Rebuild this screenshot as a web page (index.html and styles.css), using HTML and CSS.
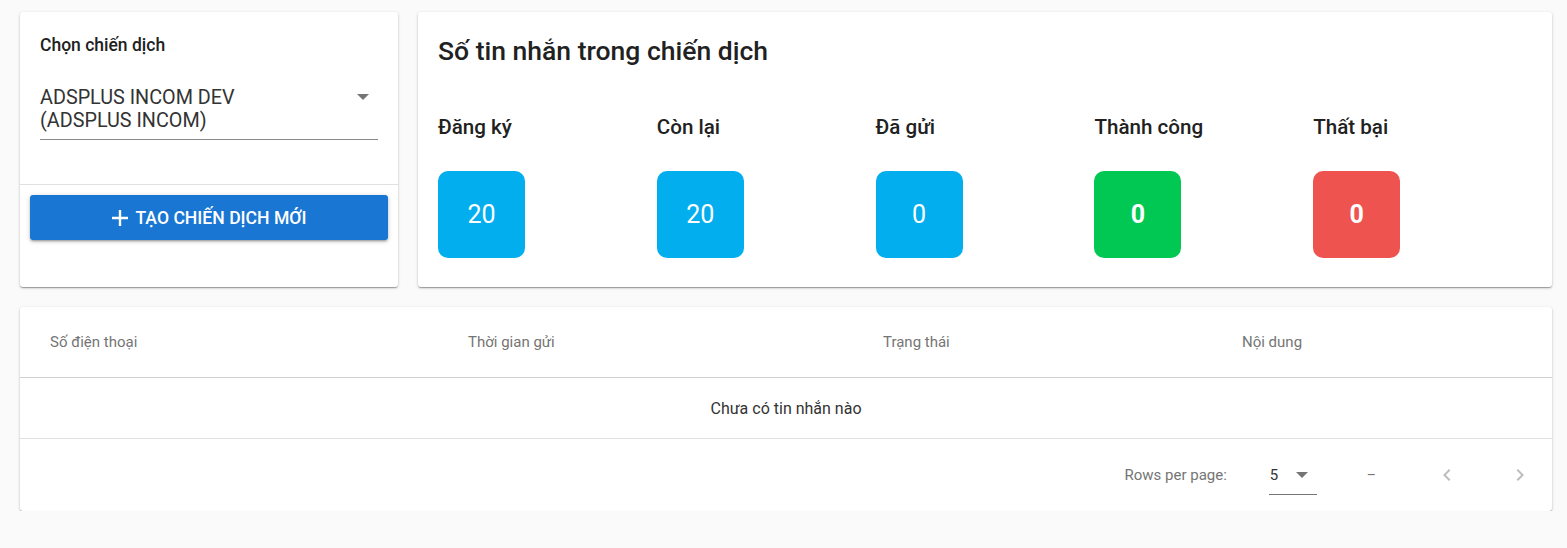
FILE: index.html
```html
<!DOCTYPE html>
<html lang="vi">
<head>
<meta charset="utf-8">
<link rel="stylesheet" href="styles.css">
</head>
<body>
<div class="page">
  <div class="top">
    <div class="card campaign">
      <div class="campaign-head">
        <div class="field-label">Chọn chiến dịch</div>
        <div class="select">
          <div class="select-text">ADSPLUS INCOM DEV<br>(ADSPLUS INCOM)</div>
          <svg class="select-arrow" width="12" height="6" viewBox="0 0 12 6"><path d="M0 0 L12 0 L6 6 Z" fill="#757575"/></svg>
        </div>
      </div>
      <div class="campaign-actions">
        <button class="btn-create">
          <svg class="plus" width="18" height="18" viewBox="0 0 18 18"><path d="M9 1 V17 M1 9 H17" stroke="#fff" stroke-width="2.4" fill="none"/></svg>
          <span>TẠO CHIẾN DỊCH MỚI</span>
        </button>
      </div>
    </div>
    <div class="card stats">
      <h2 class="stats-title">Số tin nhắn trong chiến dịch</h2>
      <div class="stats-grid">
        <div class="stat">
          <div class="stat-label">Đăng ký</div>
          <div class="stat-box blue">20</div>
        </div>
        <div class="stat">
          <div class="stat-label">Còn lại</div>
          <div class="stat-box blue">20</div>
        </div>
        <div class="stat">
          <div class="stat-label">Đã gửi</div>
          <div class="stat-box blue">0</div>
        </div>
        <div class="stat">
          <div class="stat-label">Thành công</div>
          <div class="stat-box green">0</div>
        </div>
        <div class="stat">
          <div class="stat-label">Thất bại</div>
          <div class="stat-box red">0</div>
        </div>
      </div>
    </div>
  </div>
  <div class="card table-card">
    <div class="thead">
      <div class="th">Số điện thoại</div>
      <div class="th">Thời gian gửi</div>
      <div class="th">Trạng thái</div>
      <div class="th">Nội dung</div>
    </div>
    <div class="empty-row">Chưa có tin nhắn nào</div>
    <div class="pager">
      <span class="rows-label">Rows per page:</span>
      <div class="rows-select">
        <span>5</span>
        <svg width="12" height="6" viewBox="0 0 12 6"><path d="M0 0 L12 0 L6 6 Z" fill="#757575"/></svg>
      </div>
      <span class="range">–</span>
      <button class="page-btn prev" aria-label="Previous page">
        <svg width="24" height="24" viewBox="0 0 24 24"><path d="M15.41 7.41 14 6l-6 6 6 6 1.41-1.41L10.83 12z" fill="#bdbdbd"/></svg>
      </button>
      <button class="page-btn next" aria-label="Next page">
        <svg width="24" height="24" viewBox="0 0 24 24"><path d="M10 6 8.59 7.41 13.17 12l-4.58 4.59L10 18l6-6z" fill="#bdbdbd"/></svg>
      </button>
    </div>
  </div>
</div>
</body>
</html>
```

FILE: styles.css
```css
* { box-sizing: border-box; }

html, body {
  margin: 0;
  padding: 0;
  background: #fafafa;
  font-family: Roboto, "Noto Sans", "Liberation Sans", sans-serif;
  color: #212121;
}

.page {
  padding: 12px 15px 0 20px;
  display: flex;
  flex-direction: column;
  gap: 20px;
}

.card {
  background: #fff;
  border-radius: 3px;
  box-shadow: 0 1px 3px rgba(0,0,0,.22), 0 1px 1px rgba(0,0,0,.16), 0 2px 1px -1px rgba(0,0,0,.14);
}

.top {
  display: flex;
  gap: 20px;
  height: 275px;
}

/* Campaign card */
.campaign {
  width: 378px;
  flex: none;
  display: flex;
  flex-direction: column;
}

.campaign-head {
  padding: 23px 20px 44px;
  border-bottom: 1px solid #e0e0e0;
}

.field-label {
  font-size: 17.5px;
  font-weight: 500;
  line-height: 20px;
  color: #212121;
}

.select {
  margin-top: 31px;
  display: flex;
  justify-content: space-between;
  align-items: flex-start;
  border-bottom: 1px solid #8a8a8a;
  padding-bottom: 7px;
}

.select-text {
  font-size: 19.8px;
  line-height: 23px;
  color: #333;
}

.select-arrow {
  margin: 8px 9px 0 0;
}

.campaign-actions {
  padding: 10px 10px;
}

.btn-create {
  width: 100%;
  height: 45px;
  border: none;
  border-radius: 3px;
  background: #1976d2;
  color: #fff;
  font-family: inherit;
  font-size: 17.6px;
  font-weight: 500;
  display: flex;
  align-items: center;
  justify-content: center;
  gap: 6px;
  box-shadow: 0 1px 5px rgba(0,0,0,.2), 0 2px 2px rgba(0,0,0,.14), 0 3px 1px -2px rgba(0,0,0,.12);
}

.plus { margin-top: 1px; }

/* Stats card */
.stats {
  flex: 1;
  padding: 23px 20px 29px;
}

.stats-title {
  margin: 0;
  font-size: 26.5px;
  line-height: 32px;
  font-weight: 500;
  color: #212121;
}

.stats-grid {
  margin-top: 48px;
  display: grid;
  grid-template-columns: repeat(5, 1fr);
}

.stat-label {
  font-size: 20.6px;
  line-height: 24px;
  font-weight: 500;
  color: #212121;
}

.stat-box {
  margin-top: 32px;
  width: 87px;
  height: 87px;
  border-radius: 10px;
  display: flex;
  align-items: center;
  justify-content: center;
  color: #fff;
  font-size: 25px;
}

.stat-box.blue { background: #03aeef; }
.stat-box.green { background: #00c853; font-weight: 700; }
.stat-box.red { background: #ef5350; font-weight: 700; }

/* Table */
.table-card {
  height: 204px;
  display: flex;
  flex-direction: column;
}

.thead {
  height: 71px;
  display: grid;
  grid-template-columns: 418px 415px 359px 1fr;
  align-items: center;
  padding-left: 30px;
  border-bottom: 1px solid #d0d0d0;
}

.th {
  font-size: 15px;
  color: #757575;
}

.empty-row {
  height: 61px;
  display: flex;
  align-items: center;
  justify-content: center;
  font-size: 16px;
  color: #333;
  border-bottom: 1px solid #e0e0e0;
}

.pager {
  flex: 1;
  display: flex;
  align-items: center;
  justify-content: flex-end;
  padding-right: 8px;
}

.rows-label {
  font-size: 15px;
  color: #757575;
}

.rows-select {
  margin-left: 42px;
  width: 48px;
  display: flex;
  align-items: center;
  justify-content: space-between;
  padding: 10px 9px 9px 1px;
  border-bottom: 1px solid #757575;
  font-size: 15px;
  line-height: 20px;
  color: #333;
}

.range {
  margin-left: 50px;
  font-size: 14px;
  color: #757575;
}

.page-btn {
  width: 48px;
  height: 48px;
  border: none;
  background: transparent;
  padding: 12px;
  display: flex;
  align-items: center;
  justify-content: center;
}

.page-btn.prev { margin-left: 47px; }
.page-btn.next { margin-left: 25px; }
```
